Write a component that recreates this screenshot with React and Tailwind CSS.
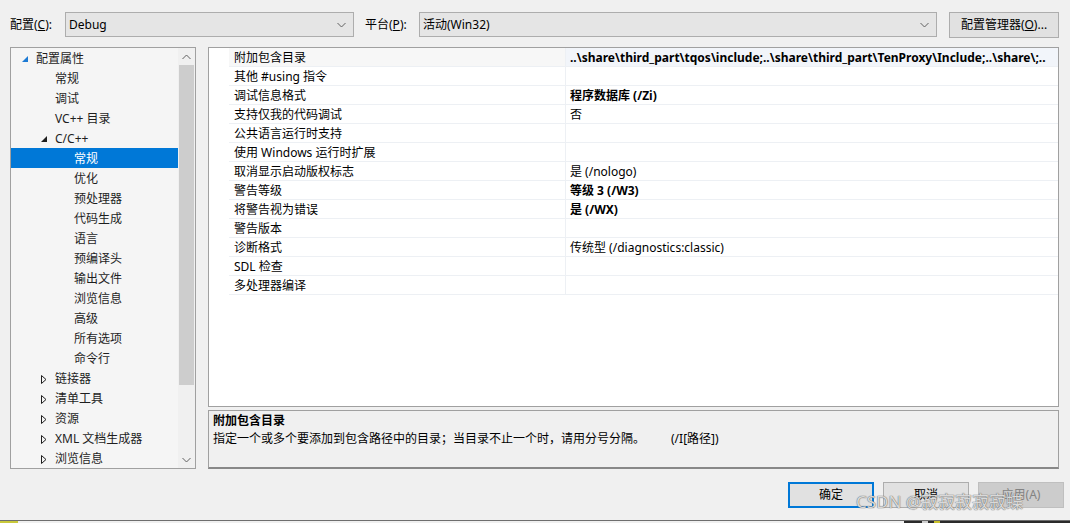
import React from 'react';

const FONT = { fontFamily: '"Noto Sans", "Noto Sans CJK SC", sans-serif' };

// --- tree data ---
const tree = [
  { label: '配置属性', level: 0, exp: 'blue' },
  { label: '常规', level: 1 },
  { label: '调试', level: 1 },
  { label: 'VC++ 目录', level: 1 },
  { label: 'C/C++', level: 1, exp: 'open' },
  { label: '常规', level: 2, selected: true },
  { label: '优化', level: 2 },
  { label: '预处理器', level: 2 },
  { label: '代码生成', level: 2 },
  { label: '语言', level: 2 },
  { label: '预编译头', level: 2 },
  { label: '输出文件', level: 2 },
  { label: '浏览信息', level: 2 },
  { label: '高级', level: 2 },
  { label: '所有选项', level: 2 },
  { label: '命令行', level: 2 },
  { label: '链接器', level: 1, exp: 'closed' },
  { label: '清单工具', level: 1, exp: 'closed' },
  { label: '资源', level: 1, exp: 'closed' },
  { label: 'XML 文档生成器', level: 1, exp: 'closed' },
  { label: '浏览信息', level: 1, exp: 'closed' },
];

const indent = ['pl-[11px]', 'pl-[30px]', 'pl-[49px]'];

const props = [
  ['附加包含目录', '..\\share\\third_part\\tqos\\include;..\\share\\third_part\\TenProxy\\Include;..\\share\\;..', true],
  ['其他 #using 指令', ''],
  ['调试信息格式', '程序数据库 (/Zi)', true],
  ['支持仅我的代码调试', '否'],
  ['公共语言运行时支持', ''],
  ['使用 Windows 运行时扩展', ''],
  ['取消显示启动版权标志', '是 (/nologo)'],
  ['警告等级', '等级 3 (/W3)', true],
  ['将警告视为错误', '是 (/WX)', true],
  ['警告版本', ''],
  ['诊断格式', '传统型 (/diagnostics:classic)'],
  ['SDL 检查', ''],
  ['多处理器编译', ''],
];

function Chevron({ up }) {
  return (
    <svg width="9" height="6" viewBox="0 0 9 6">
      <path d={up ? 'M0.5 5 L4.5 1 L8.5 5' : 'M0.5 1 L4.5 5 L8.5 1'} fill="none" stroke="#606060" strokeWidth="1" />
    </svg>
  );
}

function Expander({ kind }) {
  if (kind === 'blue' || kind === 'open') {
    return (
      <svg width="7" height="7" viewBox="0 0 7 7">
        <polygon points="6,0 6,6 0,6" fill={kind === 'blue' ? '#1c7ad4' : '#1e1e1e'} />
      </svg>
    );
  }
  if (kind === 'closed') {
    return (
      <svg width="6" height="9" viewBox="0 0 6 9">
        <polygon points="0.5,0.5 5,4.5 0.5,8.5" fill="none" stroke="#1e1e1e" strokeWidth="1" />
      </svg>
    );
  }
  return null;
}

function Combo({ value, className }) {
  return (
    <div className={`h-[25px] bg-[#e5e5e5] border border-[#adadad] flex items-center pl-[3px] pr-[7px] ${className}`}>
      <span className="flex-1 text-[12px] text-black">{value}</span>
      <Chevron />
    </div>
  );
}

export default function App() {
  return (
    <div className="w-[1070px] h-[523px] bg-[#f0f0f0] flex flex-col text-[12px] text-black overflow-hidden relative" style={FONT}>
      {/* top toolbar */}
      <div className="flex items-center h-[25px] mt-[12px]">
        <span className="ml-[10px] w-[55px]">配置(<u>C</u>):</span>
        <Combo value="Debug" className="w-[289px]" />
        <span className="ml-[11px] w-[54px]">平台(<u>P</u>):</span>
        <Combo value="活动(Win32)" className="w-[518px]" />
        <button className="ml-[12px] w-[110px] h-[26px] bg-[#e1e1e1] border border-[#adadad] text-[12px] text-black">
          配置管理器(<u>O</u>)...
        </button>
      </div>

      {/* main area */}
      <div className="flex mt-[10px] ml-[10px]">
        {/* tree */}
        <div className="w-[186px] h-[422px] border border-[#a0a0a0] bg-[#f5f5f5] flex">
          <div className="flex-1 flex flex-col overflow-hidden">
            {tree.map((t, i) => (
              <div
                key={i}
                className={`h-[20px] shrink-0 pt-[2px] flex items-center ${indent[t.level]} ${t.selected ? 'bg-[#0078d7] text-white' : 'text-[#1e1e1e]'}`}
              >
                <span className="w-[14px] flex items-center">
                  <Expander kind={t.exp} />
                </span>
                <span className="whitespace-nowrap">{t.label}</span>
              </div>
            ))}
          </div>
          {/* scrollbar */}
          <div className="w-[17px] flex flex-col items-center bg-[#f0f0f0]">
            <div className="h-[17px] flex items-center justify-center">
              <Chevron up />
            </div>
            <div className="w-[15px] h-[320px] bg-[#cdcdcd]" />
            <div className="flex-1" />
            <div className="h-[17px] flex items-center justify-center">
              <Chevron />
            </div>
          </div>
        </div>

        {/* right side */}
        <div className="ml-[12px] flex flex-col">
          <div className="w-[851px] h-[360px] border border-[#a0a0a0] bg-white flex">
            <div className="w-[20px]" />
            <div className="flex-1 flex flex-col">
              {props.map(([name, value, bold], i) => (
                <div key={i} className="h-[19px] flex border-b border-[#edf0f4]">
                  <div className={`w-[337px] pl-[5px] pt-[2px] flex items-center border-r border-[#edf0f4] ${i === 0 ? 'bg-[#f7f7f7]' : ''}`}>
                    {name}
                  </div>
                  <div
                    className={`flex-1 pl-[4px] pt-[2px] flex items-center whitespace-nowrap overflow-hidden ${bold ? 'font-bold' : ''} ${i === 0 ? 'bg-[#f2f5fa]' : ''}`}
                  >
                    {value}
                  </div>
                </div>
              ))}
            </div>
          </div>

          {/* description */}
          <div className="mt-[3px] w-[851px] h-[59px] border border-[#a0a0a0] border-b-[#888888] border-b-2 bg-[#f0f0f0] px-[4px] pt-[1px] flex flex-col">
            <div className="font-bold h-[18px] flex items-center">附加包含目录</div>
            <div className="h-[18px] flex items-center">
              <span>指定一个或多个要添加到包含路径中的目录；当目录不止一个时，请用分号分隔。</span>
              <span className="ml-[26px]">(/I[路径])</span>
            </div>
          </div>
        </div>
      </div>

      {/* dialog buttons */}
      <div className="flex mt-[13px] ml-[788px] gap-[9px]">
        <button className="w-[86px] h-[26px] bg-[#e1e1e1] border-2 border-[#0078d7] text-[12px] text-black">确定</button>
        <button className="w-[86px] h-[26px] bg-[#e1e1e1] border border-[#adadad] text-[12px] text-black">取消</button>
        <button className="w-[86px] h-[26px] bg-[#cccccc] border border-[#bfbfbf] text-[12px] text-[#838383]">应用(A)</button>
      </div>

      {/* watermark */}
      <div
        className="absolute left-[856px] top-[489px] text-[17px] text-white/75 whitespace-nowrap [text-shadow:0_0_1px_#666,0_0_1px_#666]"
        style={FONT}
      >
        CSDN @寂寂寂寂寂蝶
      </div>

      {/* taskbar sliver */}
      <div className="mt-auto h-[3px] border-t border-[#6e6e6e] flex">
        <div className="w-[18px] bg-[#c8c83a]" />
        <div className="flex-1" />
        <div className="w-[166px] bg-[#2b2b2b] flex">
          <div className="ml-[18px] w-[6px] bg-[#cfcfcf]" />
          <div className="ml-[6px] w-[6px] bg-[#c9c02a]" />
        </div>
      </div>
    </div>
  );
}
